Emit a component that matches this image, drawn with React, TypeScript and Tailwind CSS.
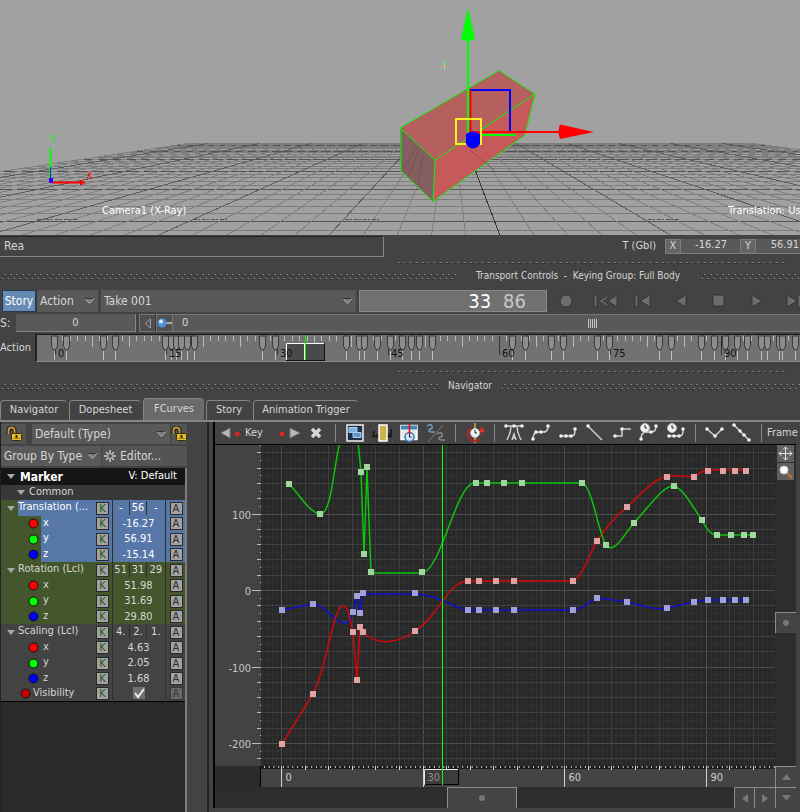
import React, { useState } from "react";

type Pt = [number, number];

const range = (a: number, b: number) => Array.from({ length: b - a + 1 }, (_, i) => a + i);

/* ---------- 3D VIEWPORT ---------- */

// Floor lines all meet at the vanishing point (450, 104)
const VX = 450;
const VY = 104;
const floorLines = range(-27, 28).map((i) => ({ slope: 0.38 + i * 0.2604, major: i % 5 === 0, key: i }));
const floorRows = range(0, 28).map((i) => ({ y: VY + 1 / (0.00792 + i * 0.000626), major: i % 5 === 1, key: i }));

function Viewport() {
  const left = 0.38 - 27 * 0.2604;
  const right = 0.38 + 28 * 0.2604;
  return (
    <div className="relative h-[235px] shrink-0 overflow-hidden bg-[#a1a1a1]">
      <svg className="absolute inset-0 h-full w-full" fill="none">
        <g shapeRendering="crispEdges">
          {floorRows.map((r) => (
            <line
              key={r.key}
              x1={VX + left * (r.y - VY)}
              x2={VX + right * (r.y - VY)}
              y1={r.y}
              y2={r.y}
              stroke={r.major ? "#545454" : "#7d7d7d"}
              strokeWidth="1"
            />
          ))}
          {floorLines.map((l) => (
            <line
              key={l.key}
              x1={VX + l.slope * 39.4}
              y1={VY + 39.4}
              x2={VX + l.slope * 132}
              y2={VY + 132}
              stroke={l.key === 0 ? "#333" : l.major ? "#5e5e5e" : "#808080"}
            />
          ))}
        </g>
        <g stroke="#555" strokeDasharray="4 1 2 2">
          <path d="M37 219.500h40M193 219.500h36M345 219.500h36M648 219.500h32M484 189.500h28M478 171.500h20" />
        </g>
        {/* marker box */}
        <path d="M400 128 499 70.500 535 94 435 160Z" fill="#b55f5f" />
        <path d="M535 94 525 135 433 201.500 435 160Z" fill="#c65a5a" />
        <path d="M400 128 435 160 433 201.500 401 171Z" fill="#855f5f" />
        <path d="M435 160 400 128 499 70.500 535 94 525 135 433 201.500 401 171V128M435 160 433 201.500M435 160 535 94" stroke="#0bf20b" />
        <path d="M403 169l14-22M409 176l10-27M470 150l26 22M418 185l5-30" stroke="#774444" opacity=".6" />
        {/* manipulator */}
        <path d="M468 132V38" stroke="#0f0" strokeWidth="2" />
        <path d="M468 8 475 39q-7 4-14 0Z" fill="#0f0" />
        <path d="M470 90H510V132" stroke="#00f" strokeWidth="2" />
        <path d="M470.500 90V132H562" stroke="#f00" strokeWidth="2" />
        <path d="M560 124.500 594 132 560 139Q557 132 560 124.500Z" fill="#f00" />
        <path d="M480 135H516" stroke="#0f0" strokeWidth="2" />
        <rect x="456" y="119" width="25" height="25" stroke="#fe2" strokeWidth="2" />
        <path d="M466 134q7-5 14 0v10q-7 9-14 0Z" fill="#00f" />
        <path d="M440 66.500h9" stroke="#e88" />
        <path d="M444.500 61v9" stroke="#6f6" />
        {/* world axis */}
        <path d="M50.500 148V180" stroke="#0f0" strokeWidth="2" />
        <path d="M50.500 167V180" stroke="#22f" strokeWidth="1" />
        <path d="M52 182.500H85M81 180v5" stroke="#f00" strokeWidth="2" />
        <rect x="49" y="178" width="4" height="5" fill="#30f" />
        <text x="50" y="143" fontSize="10" fill="#0f0">Y</text>
        <text x="86" y="179" fontSize="11" fill="#e11">X</text>
      </svg>
      <span className="absolute left-[102px] top-[203px] text-[11px] leading-4 text-white">Camera1 (X-Ray)</span>
      <span className="absolute left-[728px] top-[203px] whitespace-nowrap text-[11px] leading-4 text-white">
        Translation: Us
      </span>
    </div>
  );
}

/* ---------- STATUS + TRANSPORT ---------- */

function Grip({ className }: { className: string }) {
  return (
    <svg className={`h-[7px] ${className}`}>
      <defs>
        <pattern id="grip" width="6" height="7" patternUnits="userSpaceOnUse">
          <path d="M0 6.500h2M3 2.500h2" stroke="#2b2b2b" />
          <path d="M1 5.500h2M4 1.500h2" stroke="#7a7a7a" />
        </pattern>
      </defs>
      <rect width="100%" height="7" fill="url(#grip)" />
    </svg>
  );
}

// Row of dots that marks the edge of a resizable pane
function PaneDots() {
  return (
    <svg className="ml-auto mr-3 h-1 w-[390px]">
      <path d="M0 1.500H390" stroke="#7a7a7a" strokeDasharray="2 4" />
      <path d="M1 2.500H390" stroke="#2b2b2b" strokeDasharray="2 4" />
    </svg>
  );
}

function GripTitle({ children, before, gap }: { children: React.ReactNode; before: string; gap: string }) {
  return (
    <div className={`flex h-4 items-center ${gap}`}>
      <Grip className={before} />
      <span className="shrink-0 whitespace-pre text-[10px] leading-4">{children}</span>
      <Grip className="min-w-0 flex-1" />
    </div>
  );
}

function StatusBar() {
  return (
    <div className="flex h-[26px] items-center bg-[#434343]">
      <input
        aria-label="Script input"
        defaultValue="Rea"
        className="mb-1 h-[21px] w-[384px] border border-l-0 border-[#868686] border-t-[#242424] bg-[#434343] pl-1 text-xs outline-none"
      />
      <div className="mb-1 ml-auto flex items-center">
        <span className="mr-[9px] text-[11px]">T (Gbl)</span>
        <label htmlFor="tx" className="flex h-[15px] w-4 items-center justify-center border border-[#7d7d7d] bg-[#666] text-[11px]">X</label>
        <input id="tx" defaultValue="-16.27" className="h-[15px] w-[59px] border-b border-[#7d7d7d] bg-[#595959] px-[13px] text-right text-[11px] outline-none" />
        <label htmlFor="ty" className="flex h-[15px] w-4 items-center justify-center border border-[#7d7d7d] bg-[#666] text-[11px]">Y</label>
        <input id="ty" defaultValue="56.91" className="h-[15px] w-11 border-b border-[#7d7d7d] bg-[#595959] pr-px text-right text-[11px] outline-none" />
      </div>
    </div>
  );
}

function Arrow({ className = "" }: { className?: string }) {
  return (
    <svg width="11" height="7" className={`pointer-events-none shrink-0 ${className}`}>
      <path d="M1 .500h9L5.500 5.500Z" fill="#777" stroke="#b5b5b5" />
      <path d="M.500 .500h9" stroke="#333" />
    </svg>
  );
}

function TreeArrow({ className = "" }: { className?: string }) {
  return (
    <svg width="8" height="5" className={`shrink-0 ${className}`}>
      <path d="M0 0h8L4 5Z" fill="#a8a8a8" />
    </svg>
  );
}

function Select({ label, value, className }: { label: string; value: string; className: string }) {
  return (
    <div className={`relative flex items-center bg-[#595959] ${className}`}>
      <select aria-label={label} className="h-full w-full appearance-none bg-transparent pl-[3px] text-xs outline-none">
        <option>{value}</option>
      </select>
      <Arrow className="absolute right-[3px]" />
    </div>
  );
}

const transport = [
  { name: "Record", d: "M13 11a6 6 0 1 0 12 0a6 6 0 1 0-12 0" },
  { name: "Go to start", d: "M9 5h3v12H9zM23 5v3l-5 3 5 3v3l-9-6zM32 5v12l-9-6z" },
  { name: "Previous key", d: "M12 5h3v12h-3zM17 11l10-6v12z" },
  { name: "Play backward", d: "M15 11l10-6v12z" },
  { name: "Stop", d: "M14 5h11v11H14z" },
  { name: "Play", d: "M15 5l10 6-10 6z" },
  { name: "Next key", d: "M12 5l10 6-10 6zM23 5h3v12h-3z" },
];

function TransportRow() {
  return (
    <div className="flex h-[22px] overflow-hidden">
      <button className="ml-0.5 w-[34px] border border-[#213a58] bg-[#668bb5] text-xs text-white">Story</button>
      <Select label="Mode" value="Action" className="w-[62px] border-l border-[#383838]" />
      <Select label="Take" value="Take 001" className="ml-[3px] min-w-[100px] flex-1" />
      <div className="ml-[3px] flex w-[188px] shrink-0 items-center justify-end gap-3 border border-[#888] bg-[#707070] pr-5 text-xl leading-none">
        <span className="text-white">33</span>
        <span className="text-[#c8c8c8]">86</span>
      </div>
      <div className="flex w-[253px] shrink-0 overflow-hidden">
        {transport.map((b) => (
          <button key={b.name} aria-label={b.name} className="w-[38px] shrink-0">
            <svg width="38" height="22">
              <path d={b.d} fill="#6d6d6d" stroke="#343434" />
            </svg>
          </button>
        ))}
      </div>
    </div>
  );
}

function ShuttleRow() {
  return (
    <div className="mt-0.5 flex h-[18px] items-center text-xs">
      <label htmlFor="shuttle" className="w-4 shrink-0">S:</label>
      <input id="shuttle" defaultValue="0" className="h-[18px] w-[120px] border-b border-r border-[#868686] bg-[#595959] text-center text-[11px] outline-none" />
      <button aria-label="Step back" className="ml-[3px] h-[18px] w-[17px] border border-[#777] border-r-[#333] bg-[#505050]">
        <svg width="15" height="14"><path d="M10.500 3v9L5 7.500Z" fill="#555" stroke="#999" /></svg>
      </button>
      <button aria-label="Snap" className="h-[18px] w-[17px] border border-[#777] bg-[#505050]">
        <svg width="15" height="16">
          <path d="M8 8h7" stroke="#aaa" strokeWidth="2" />
          <circle cx="5" cy="8" r="4.500" fill="#4b8fd8" />
          <circle cx="4" cy="6.500" r="2" fill="#d5e9ff" />
        </svg>
      </button>
      <div className="flex h-[18px] flex-1 items-center border-y border-[#777] bg-[#595959] pl-[9px] text-[11px]">
        0
        <span className="ml-auto mr-[203px] flex gap-px">
          {range(0, 4).map((i) => <i key={i} className="h-[9px] w-px bg-[#c5c5c5]" />)}
        </span>
      </div>
    </div>
  );
}

const timeKeys = [
  19, 31, 68, 80, 130, 136, 141, 146, 152, 159, 227, 240, 311, 324, 329, 342, 355, 367, 376, 384, 397, 477, 490, 516,
  528, 562, 574, 624, 636, 666, 679, 690, 702, 712, 726, 732, 744, 747, 760,
];

function Timeline() {
  return (
    <div className="mt-0.5 flex h-7 items-center">
      <span className="w-[35px] shrink-0 text-[11px]">Action</span>
      <svg className="h-7 min-w-0 flex-1 border border-l-2 border-r-0 border-[#8a8a8a] border-l-[#222] border-t-[#161616] bg-[#727272]">
        <g transform="translate(-2 -1)">
          {range(0, 102).map((f) => {
            const x = Math.round(20 + f * 7.4) + 0.5;
            return <path key={f} d={`M${x} 2V${f % 15 === 0 ? 21 : f % 5 === 0 ? 13 : 7}`} stroke={f % 15 === 0 ? "#333" : "#b9b9b9"} />;
          })}
          <rect x="251.500" y="9.500" width="38" height="17" fill="#4a4a4a" stroke="#111" />
          <path d="M251.500 26V9.500H289M269.500 10v16" stroke="#fff" fill="none" />
          {timeKeys.map((x) => (
            <g key={x}>
              <path d={`M${x + 0.5} 17V26`} stroke="#c2c2c2" />
              <path d={`M${x - 2.5} 2v10l2 4h2l2-4V2Z`} fill="#8d8d8d" stroke="#3a3a3a" />
            </g>
          ))}
          {range(0, 6).map((i) => (
            <text key={i} x={23 + i * 111} y="23" fontSize="11" fill="#111">{i * 15}</text>
          ))}
          <path d="M270.500 1V26" stroke="#0f0" />
        </g>
      </svg>
    </div>
  );
}

/* ---------- TABS ---------- */

const tabs = [
  { name: "Navigator", width: "w-[67px]" },
  { name: "Dopesheet", width: "w-[72px]" },
  { name: "FCurves", width: "w-[61px]" },
  { name: "Story", width: "w-[45px]" },
  { name: "Animation Trigger", width: "w-[105px]" },
];

/* ---------- PROPERTY TREE ---------- */

function Lock() {
  return (
    <svg width="16" height="16">
      <path d="M2.500 8V4.500a3 3 0 0 1 6 0V8" stroke="#111" strokeWidth="4" fill="none" />
      <path d="M2.500 8V4.500a3 3 0 0 1 6 0V8" stroke="#c79a3c" strokeWidth="2" fill="none" />
      <rect x="5.500" y="7.500" width="10" height="7" rx="1" fill="#e3bd2e" stroke="#3a2c00" />
      <path d="M7 12.500h7" stroke="#a98512" />
      <path d="M10.500 9v3" stroke="#3a2c00" strokeWidth="2" />
    </svg>
  );
}

const rows = [
  { name: "Translation (...", parts: ["-", "56", "-"], tone: "sel" },
  { name: "x", value: "-16.27", dot: "#ff0000", tone: "sel" },
  { name: "y", value: "56.91", dot: "#00ff00", tone: "sel" },
  { name: "z", value: "-15.14", dot: "#0000ff", tone: "sel" },
  { name: "Rotation (Lcl)", parts: ["51", "31", "29"], tone: "green" },
  { name: "x", value: "51.98", dot: "#ff0000", tone: "green" },
  { name: "y", value: "31.69", dot: "#00ff00", tone: "green" },
  { name: "z", value: "29.80", dot: "#0000ff", tone: "green" },
  { name: "Scaling (Lcl)", parts: ["4.", "2.", "1."], tone: "plain" },
  { name: "x", value: "4.63", dot: "#ff0000", tone: "plain" },
  { name: "y", value: "2.05", dot: "#00ff00", tone: "plain" },
  { name: "z", value: "1.68", dot: "#0000ff", tone: "plain" },
];

function KeyButton({ letter, label }: { letter: string; label: string }) {
  return (
    <button
      aria-label={label}
      className={`block h-[13px] w-[13px] border border-[#2a2a2a] bg-[#a2a2a2] text-[11px] leading-[11px] ${
        letter === "K" ? "text-[#1f5a10]" : "text-[#2c2c2c]"
      }`}
    >
      {letter}
    </button>
  );
}

function PropertyTree() {
  return (
    <aside className="flex w-[187px] shrink-0 flex-col border-l border-[#222] pt-0.5">
      <div className="flex h-5 gap-1.5">
        <button aria-label="Lock" className="flex w-[25px] items-center justify-center bg-[#545454]"><Lock /></button>
        <Select label="Filter" value="Default (Type)" className="flex-1" />
        <button aria-label="Lock filter" className="-ml-[5px] flex w-4 items-center bg-[#545454]"><Lock /></button>
      </div>
      <div className="mt-0.5 flex h-5">
        <Select label="Grouping" value="Group By Type" className="w-[100px]" />
        <button className="ml-px flex flex-1 items-center gap-1 bg-[#545454] pl-0.5 text-xs">
          <svg width="12" height="12" stroke="#c8c8c8" fill="none">
            <circle cx="6" cy="6" r="2.500" />
            <path d="M6 0v3M6 9v3M0 6h3M9 6h3M2 2l2 2M8 8l2 2M10 2 8 4M4 8l-2 2" strokeWidth="1.500" />
          </svg>
          Editor...
        </button>
      </div>

      <div className="mt-0.5 flex-1 border-r-2 border-[#7c7c7c] bg-[#2a2a2a]">
        <div className="flex h-[17px] items-center bg-[#151515] text-white">
          <TreeArrow className="ml-1.5" />
          <span className="ml-[5px] text-xs font-bold">Marker</span>
          <span className="ml-auto mr-2 text-[11px]">V: Default</span>
        </div>
        <div className="flex h-[15px] items-center bg-[#383838] text-[11px]">
          <TreeArrow className="ml-4 mr-1" />
          Common
        </div>
        <table className="w-full table-fixed border-collapse border-b border-black text-[11px] leading-[14px]">
          <colgroup>
            <col className="w-[94px]" />
            <col className="w-[17px]" />
            <col />
            <col className="w-5" />
          </colgroup>
          <tbody>
            {rows.map((r, i) => {
              const base = r.tone === "plain" ? "bg-[#434343]" : "bg-[#43562c]";
              const cell = r.tone === "sel" ? "bg-[#5677a8] text-white" : base;
              const height = i % 2 === 0 ? "h-4" : "h-[15px]";
              return (
                <tr key={i} className={`${base} ${height}`}>
                  <td className="p-0">
                    {r.parts ? (
                      <div className="flex items-center">
                        <TreeArrow className="ml-1.5 mr-[3px]" />
                        <span className={`flex-1 whitespace-nowrap ${height} ${cell}`}>{r.name}</span>
                      </div>
                    ) : (
                      <div className="flex items-center">
                        <svg width="11" height="11" className="ml-[27px] mr-0.5 shrink-0">
                          <circle cx="5.500" cy="5.500" r="4.500" fill={r.dot} stroke="#111" />
                        </svg>
                        <span className={`flex-1 pl-0.5 ${height} ${cell}`}>{r.name}</span>
                      </div>
                    )}
                  </td>
                  <td className={`p-0 pl-px ${cell}`}><KeyButton letter="K" label={`Key ${r.name}`} /></td>
                  <td className={`border-x border-[#2f2f2f] p-0 text-center ${cell}`}>
                    {r.parts ? (
                      <div className="grid grid-cols-3 divide-x divide-[#2f2f2f]">
                        {r.parts.map((p, n) => <span key={n}>{p}</span>)}
                      </div>
                    ) : (
                      r.value
                    )}
                  </td>
                  <td className={`p-0 pl-1 ${cell}`}><KeyButton letter="A" label={`Animate ${r.name}`} /></td>
                </tr>
              );
            })}
            <tr className="h-[15px] bg-[#434343]">
              <td className="p-0">
                <label htmlFor="vis" className="flex items-center">
                  <svg width="11" height="11" className="ml-[19px] mr-0.5 shrink-0">
                    <circle cx="5.500" cy="5.500" r="4.500" fill="#c40000" stroke="#111" />
                  </svg>
                  Visibility
                </label>
              </td>
              <td className="p-0 pl-px"><KeyButton letter="K" label="Key Visibility" /></td>
              <td className="border-x border-[#2f2f2f] p-0">
                <div className="relative mx-auto h-3 w-3">
                  <input id="vis" type="checkbox" defaultChecked className="block h-3 w-3 appearance-none bg-[#707070]" />
                  <svg width="12" height="12" className="pointer-events-none absolute inset-0">
                    <path d="M2 6l3 4 6-8" stroke="#eee" strokeWidth="2" fill="none" />
                  </svg>
                </div>
              </td>
              <td className="p-0 pl-1 opacity-40"><KeyButton letter="A" label="Animate Visibility" /></td>
            </tr>
          </tbody>
        </table>
      </div>
    </aside>
  );
}

/* ---------- FCURVE TOOLBAR ---------- */

function Dot({ x, y }: { x: number; y: number }) {
  return <circle cx={x} cy={y} r="1.800" fill="#f0f0f0" stroke="none" />;
}

function Clock({ x, y }: { x: number; y: number }) {
  return (
    <g>
      <circle cx={x} cy={y} r="4.500" fill="#f2f2f2" stroke="#bbb" strokeWidth="1" />
      <path d={`M${x} ${y - 3}v3h2`} stroke="#222" strokeWidth="1" />
    </g>
  );
}

const viewIcons = [
  {
    name: "Frame layers",
    art: (
      <>
        <rect x="2" y="2" width="16" height="16" fill="#1d3146" stroke="#f2f2f2" />
        <path d="M4 4.500h8v5H4z" fill="#7fb2da" stroke="#a9d2f2" strokeWidth="1" />
        <path d="M8 9.500h8v5H8z" fill="#5c94c4" stroke="#a9d2f2" strokeWidth="1" />
      </>
    ),
  },
  {
    name: "Time range",
    art: (
      <>
        <path d="M1.500 8v5M4.500 11v2M16.500 10v3M19 6v7M0 13.500h20" stroke="#161616" />
        <rect x="7" y="2" width="8" height="16" fill="#c8b34c" stroke="#fff" />
      </>
    ),
  },
  {
    name: "Current time",
    art: (
      <>
        <path d="M2 2.500h16v14H2z" fill="#e9e9e9" stroke="#fff" />
        <path d="M2 2.500h16v4H2z" fill="#4185b9" stroke="none" />
        <circle cx="10.500" cy="14" r="4.500" fill="#cfe6fa" stroke="#3a78ad" />
        <path d="M10.500 1v10" stroke="#f00" />
        <path d="M10.500 11v3h2" stroke="#222" strokeWidth="1" />
      </>
    ),
  },
  {
    name: "Isolate curves",
    art: (
      <>
        <path d="M1 3q4-3 5 0t-2 3q-3 2 1 3h4" stroke="#6ea0c8" />
        <path d="M17 2 2 19" stroke="#777" strokeWidth="1" />
        <path d="M11 11q4-3 5 0t-2 3q-3 2 1 3h4" stroke="#888" />
      </>
    ),
  },
];

const curveIcons = [
  {
    name: "Auto",
    art: (
      <>
        <path d="M2 3h16M7 3C7 11 4 14 3 17M13 3c0 8 3 11 4 14" />
        <Dot x={2} y={3} /><Dot x={10} y={3} /><Dot x={18} y={3} />
        <path d="M8 17l2-6 2 6M8.500 15h3" />
      </>
    ),
  },
  { name: "Spline", art: <><path d="M2 17c0-7 2-8 8-8 6 0 7-1 7-7M5 9h10" /><Dot x={2} y={16} /><Dot x={5} y={9} /><Dot x={10} y={9} /><Dot x={17} y={3} /></> },
  { name: "Flat", art: <><path d="M2 13h10c5 0 5-2 5-7" /><Dot x={3} y={13} /><Dot x={8} y={13} /><Dot x={13} y={13} /><Dot x={17} y={6} /></> },
  { name: "Linear", art: <><path d="M3 3 17 17" /><Dot x={3} y={3} /></> },
  { name: "Stepped", art: <><path d="M2 13h8V6h9" /><Dot x={3} y={13} /><Dot x={10} y={6} /></> },
  {
    name: "Smooth clamp",
    art: <><path d="M2 17c0-7 2-8 8-8 6 0 7-1 7-7" /><Clock x={6} y={5} /><Dot x={2} y={16} /><Dot x={12} y={9} /><Dot x={17} y={3} /></>,
  },
  {
    name: "Flat clamp",
    art: <><path d="M3 13h9c5 0 5-2 5-7" /><Clock x={6} y={5} /><Dot x={3} y={13} /><Dot x={8} y={13} /><Dot x={13} y={13} /><Dot x={17} y={6} /></>,
  },
];

const breakIcons = [
  { name: "Break", art: <><path d="M2 6l8 7 7-7" /><Dot x={2} y={6} /><Dot x={10} y={13} /><Dot x={17} y={6} /></> },
  { name: "Unify", art: <><path d="M2 2l15 15" /><Dot x={2} y={2} /><Dot x={8} y={8} /><Dot x={12} y={12} /><Dot x={17} y={17} /></> },
];

function IconButtons({ items }: { items: { name: string; art: React.ReactNode }[] }) {
  return (
    <>
      {items.map((it) => (
        <button key={it.name} aria-label={it.name} className="flex h-full w-[27px] shrink-0 items-center justify-center">
          <svg width="20" height="20" fill="none" stroke="#cfcfcf" strokeWidth="1.500">{it.art}</svg>
        </button>
      ))}
    </>
  );
}

const Sep = () => (
  <span className="flex w-3 shrink-0 justify-center"><i className="h-[18px] w-px bg-[#858585]" /></span>
);

function CurveToolbar() {
  return (
    <div className="flex h-[22px] items-center overflow-hidden border-l-2 border-black bg-[#434343] pl-0.5">
      <button aria-label="Previous key" className="w-7 shrink-0">
        <svg width="28" height="20">
          <path d="M13 5v10L4 10Z" fill="#b8b8b8" stroke="#777" />
          <circle cx="20" cy="11" r="2.500" fill="#d02a2a" />
        </svg>
      </button>
      <button className="w-7 shrink-0 text-left text-[11px] leading-5">Key</button>
      <button aria-label="Next key" className="w-7 shrink-0">
        <svg width="28" height="20">
          <circle cx="9" cy="11" r="2.500" fill="#d02a2a" />
          <path d="M17 5v10l10-5Z" fill="#b8b8b8" stroke="#777" />
        </svg>
      </button>
      <button aria-label="Delete key" className="w-7 shrink-0">
        <svg width="28" height="20"><path d="M11 6l8 8M19 6l-8 8" stroke="#d8d8d8" strokeWidth="3.500" /></svg>
      </button>
      <Sep />
      <IconButtons items={viewIcons} />
      <Sep />
      <IconButtons
        items={[
          {
            name: "Loop",
            art: (
              <>
                <path d="M10 0v20" stroke="#d8b52c" />
                <path d="M15 16a7 7 0 0 1-10 0 7 7 0 0 1 1-11M15 5a7 7 0 0 1 2 7" stroke="#b02a24" strokeWidth="2" />
                <path d="M14 9h6l-3-5z" fill="#d8332a" stroke="none" />
                <Clock x={10} y={10} />
              </>
            ),
          },
        ]}
      />
      <Sep />
      <IconButtons items={curveIcons} />
      <Sep />
      <IconButtons items={breakIcons} />
      <Sep />
      <span className="text-[11px]">Frame</span>
    </div>
  );
}

/* ---------- FCURVE GRAPH ---------- */

// Plot space: frame 0 sits at x 66, value 0 at y 145
const fx = (frame: number) => Math.round(66 + frame * 4.72) + 0.5;
const fy = (value: number) => Math.round(145 - value * 0.765) + 0.5;

const curves: { stroke: string; fill: string; d: string; keys: Pt[] }[] = [
  {
    stroke: "#1010c8",
    fill: "#a0a0da",
    d: "M67 165L98 159C113 161 118 179 131 178C136 177 136 174 138 167L142 151 145 168 148 149H200C220 149 235 161 253 165H358C368 165 374 155 382 154C392 153 400 156 412 157C425 160 442 166 452 163L479 157Q486 155 493 155H531",
    keys: [[67, 165], [98, 159], [138, 167], [142, 151], [145, 168], [148, 148], [200, 148], [253, 165], [264, 165], [281, 165], [299, 165], [358, 165], [382, 153], [412, 157], [452, 163], [479, 157], [493, 155], [508, 155], [520, 155], [531, 155]],
  },
  {
    stroke: "#d40808",
    fill: "#e0a3a3",
    d: "M67 299L98 249C113 219 118 161 128 161C134 161 135 177 138 187L142 235 145 182 148 187C162 201 182 199 200 186C223 172 233 136 253 136H358C367 133 375 108 382 96C392 81 402 70 412 62C427 48 440 33 452 31C462 30 470 32 479 32Q486 26 493 25H531",
    keys: [[67, 299], [98, 249], [138, 187], [142, 235], [145, 182], [148, 187], [200, 186], [253, 136], [264, 136], [281, 136], [299, 136], [358, 136], [382, 96], [412, 62], [452, 32], [479, 32], [493, 26], [508, 26], [520, 26], [531, 26]],
  },
  {
    stroke: "#0cc40c",
    fill: "#a0d6a0",
    d: "M74 39C85 50 94 67 105 69C116 70 118 27 125-4M143-4L146 27 149 109 152 23 156 128H207C226 125 240 44 258 38H367C377 40 383 87 391 100C399 110 408 91 419 78C434 62 448 40 459 41C470 45 478 63 487 75Q494 90 502 90H538",
    keys: [[74, 39], [105, 69], [146, 27], [149, 109], [152, 22], [156, 127], [207, 127], [261, 38], [272, 38], [289, 38], [307, 38], [367, 38], [391, 100], [419, 78], [459, 41], [487, 75], [502, 90], [516, 90], [529, 90], [538, 90]],
  },
];

const bar = "flex h-[21px] items-center justify-center border-l border-t border-[#8c8c8c] bg-[#444]";

function CurveGraph() {
  return (
    <div className="flex flex-1 flex-col border-l-2 border-black">
      <div className="flex min-h-[322px] flex-1 border-t border-black">
        <div className="relative min-w-0 flex-1 bg-[#282828]">
          <svg className="absolute inset-0 h-full w-full">
            <g shapeRendering="crispEdges">
              {range(-4, 105).map((f) => (
                <path key={f} d={`M${fx(f)} 0V400`} stroke={f % 30 === 0 ? "#4f4f4f" : f % 5 === 0 ? "#404040" : "#303030"} />
              ))}
              {range(-24, 19).map((v) => (
                <path key={v} d={`M46 ${fy(v * 10)}H800`} stroke={v % 10 === 0 ? "#4d4d4d" : v % 2 === 0 ? "#404040" : "#303030"} />
              ))}
            </g>
            {curves.map((c) => (
              <g key={c.stroke}>
                <path d={c.d} fill="none" stroke={c.stroke} strokeWidth="1.500" />
                {c.keys.map(([x, y], i) => (
                  <rect key={i} x={x - 3} y={y - 3} width="6" height="6" fill={c.fill} />
                ))}
              </g>
            ))}
            <path d="M227.500 0V400" stroke="#0f0" />
            <rect width="46" height="400" fill="#434343" />
            {range(-24, 19).map((v) => (
              <path key={v} d={`M${v % 10 === 0 ? 37 : v % 2 === 0 ? 42 : 45} ${fy(v * 10)}H46`} stroke="#bdbdbd" />
            ))}
            {[100, 0, -100, -200].map((v) => (
              <text key={v} x="36" y={fy(v) + 4} textAnchor="end" fontSize="11" fill="#c6c6c6">{v}</text>
            ))}
          </svg>
        </div>
        <div className="w-[21px] shrink-0 bg-[#2d2d2d]">
          <div className="ml-0.5 flex h-[167px] w-[17px] flex-col gap-px">
            <button aria-label="Pan" className="flex h-[17px] items-center justify-center bg-[#606060]">
              <svg width="15" height="15" stroke="#e8e8e8" fill="none">
                <path d="M7.500 1v13M1 7.500h13M5 3.500l2.500-2.500L10 3.500M5 11.500l2.500 2.500 2.500-2.500M3.500 5 1 7.500 3.500 10M11.500 5 14 7.500 11.500 10" />
              </svg>
            </button>
            <button aria-label="Zoom" className="flex h-[17px] items-center justify-center bg-[#606060]">
              <svg width="15" height="15">
                <path d="M9 9l5 5" stroke="#b0733c" strokeWidth="2.500" />
                <circle cx="6" cy="6" r="4" fill="#fff" stroke="#ccc" />
              </svg>
            </button>
          </div>
          <button aria-label="Vertical scroll" className={`${bar} w-[21px]`}>
            <i className="h-1.5 w-1.5 rounded-full bg-[#777]" />
          </button>
        </div>
      </div>

      <div className="flex h-[21px]">
        <div className="w-[46px] shrink-0 border-r border-black bg-[#2b2b2b]" />
        <svg className="h-[21px] min-w-0 flex-1 bg-[#434343]">
          <path d="M0 1.500H800" stroke="#1c1c1c" strokeWidth="3" />
          <path d="M0 1H800" stroke="#ccc" strokeWidth="2" strokeDasharray="1 3.720" strokeDashoffset="-3" />
          {range(0, 20).map((i) => (
            <path key={i} d={`M${fx(i * 5) - 46} 0V${i % 6 === 0 ? 21 : 4}`} stroke="#d2d2d2" />
          ))}
          <rect x="163.500" y="3.500" width="34" height="15" fill="#3c3c3c" stroke="#000" />
          <path d="M163.500 19V3.500H197" stroke="#e6e6e6" fill="none" />
          {[0, 30, 60, 90].map((f) => (
            <text key={f} x={fx(f) - 42} y="15" fontSize="11" fill={f === 30 ? "#8e8e8e" : "#d0d0d0"}>{f}</text>
          ))}
          <path d="M181.500 0V19" stroke="#0f0" />
        </svg>
        <button aria-label="Scroll up" className={`${bar} w-[21px]`}><svg width="9" height="6"><path d="M4.500 0 9 6H0Z" fill="#777" /></svg></button>
      </div>

      <div className="flex h-[21px] bg-[#2d2d2d]">
        <button aria-label="Horizontal scroll" className={`${bar} ml-[232px] w-[70px] border-r`}>
          <i className="h-1.5 w-1.5 rounded-full bg-[#777]" />
        </button>
        <span className="flex-1" />
        <button aria-label="Scroll left" className={`${bar} w-5`}><svg width="6" height="9"><path d="M6 0v9L0 4.500Z" fill="#777" /></svg></button>
        <button aria-label="Scroll right" className={`${bar} w-[21px]`}><svg width="6" height="9"><path d="M0 0v9l6-4.500Z" fill="#777" /></svg></button>
        <button aria-label="Scroll down" className={`${bar} w-[21px]`}><svg width="9" height="6"><path d="M4.500 6 9 0H0Z" fill="#777" /></svg></button>
      </div>
    </div>
  );
}

export default function App() {
  const [activeTab, setActiveTab] = useState("FCurves");

  return (
    <div className="flex min-h-screen flex-col overflow-hidden bg-[#434343] font-['DejaVu_Sans_Condensed','DejaVu_Sans',sans-serif] text-[#d6d6d6]">
      <Viewport />
      <StatusBar />

      {/* TRANSPORT */}
      <section>
        <div className="h-[7px]"><PaneDots /></div>
        <GripTitle before="w-[57%]" gap="gap-5">{"Transport Controls  -  Keying Group: Full Body"}</GripTitle>
        <div className="pt-1.5">
          <TransportRow />
          <ShuttleRow />
          <Timeline />
        </div>
      </section>

      {/* NAVIGATOR */}
      <section className="flex flex-1 flex-col">
        <div className="h-4 pt-2"><PaneDots /></div>
        <GripTitle before="w-[55%]" gap="gap-2">Navigator</GripTitle>
        <div role="tablist" className="mt-1 flex h-[22px] items-end gap-0.5">
          {tabs.map((t) => (
            <button
              key={t.name}
              role="tab"
              aria-selected={activeTab === t.name}
              onClick={() => setActiveTab(t.name)}
              className={`whitespace-nowrap rounded-t border-l border-t border-[#858585] text-[11px] ${t.width} ${
                activeTab === t.name ? "h-[22px] bg-[#6a6a6a]" : "h-5 bg-[#434343]"
              }`}
            >
              {t.name}
            </button>
          ))}
        </div>
        <div className="flex flex-1 border-t-2 border-[#858585]">
          <PropertyTree />
          <div className="ml-5 mr-1 w-0.5 shrink-0 bg-[#222]" />
          <div className="flex min-w-0 flex-1 flex-col pb-1">
            <CurveToolbar />
            <div className="flex flex-1 pr-1">
              <CurveGraph />
            </div>
          </div>
        </div>
      </section>
    </div>
  );
}
